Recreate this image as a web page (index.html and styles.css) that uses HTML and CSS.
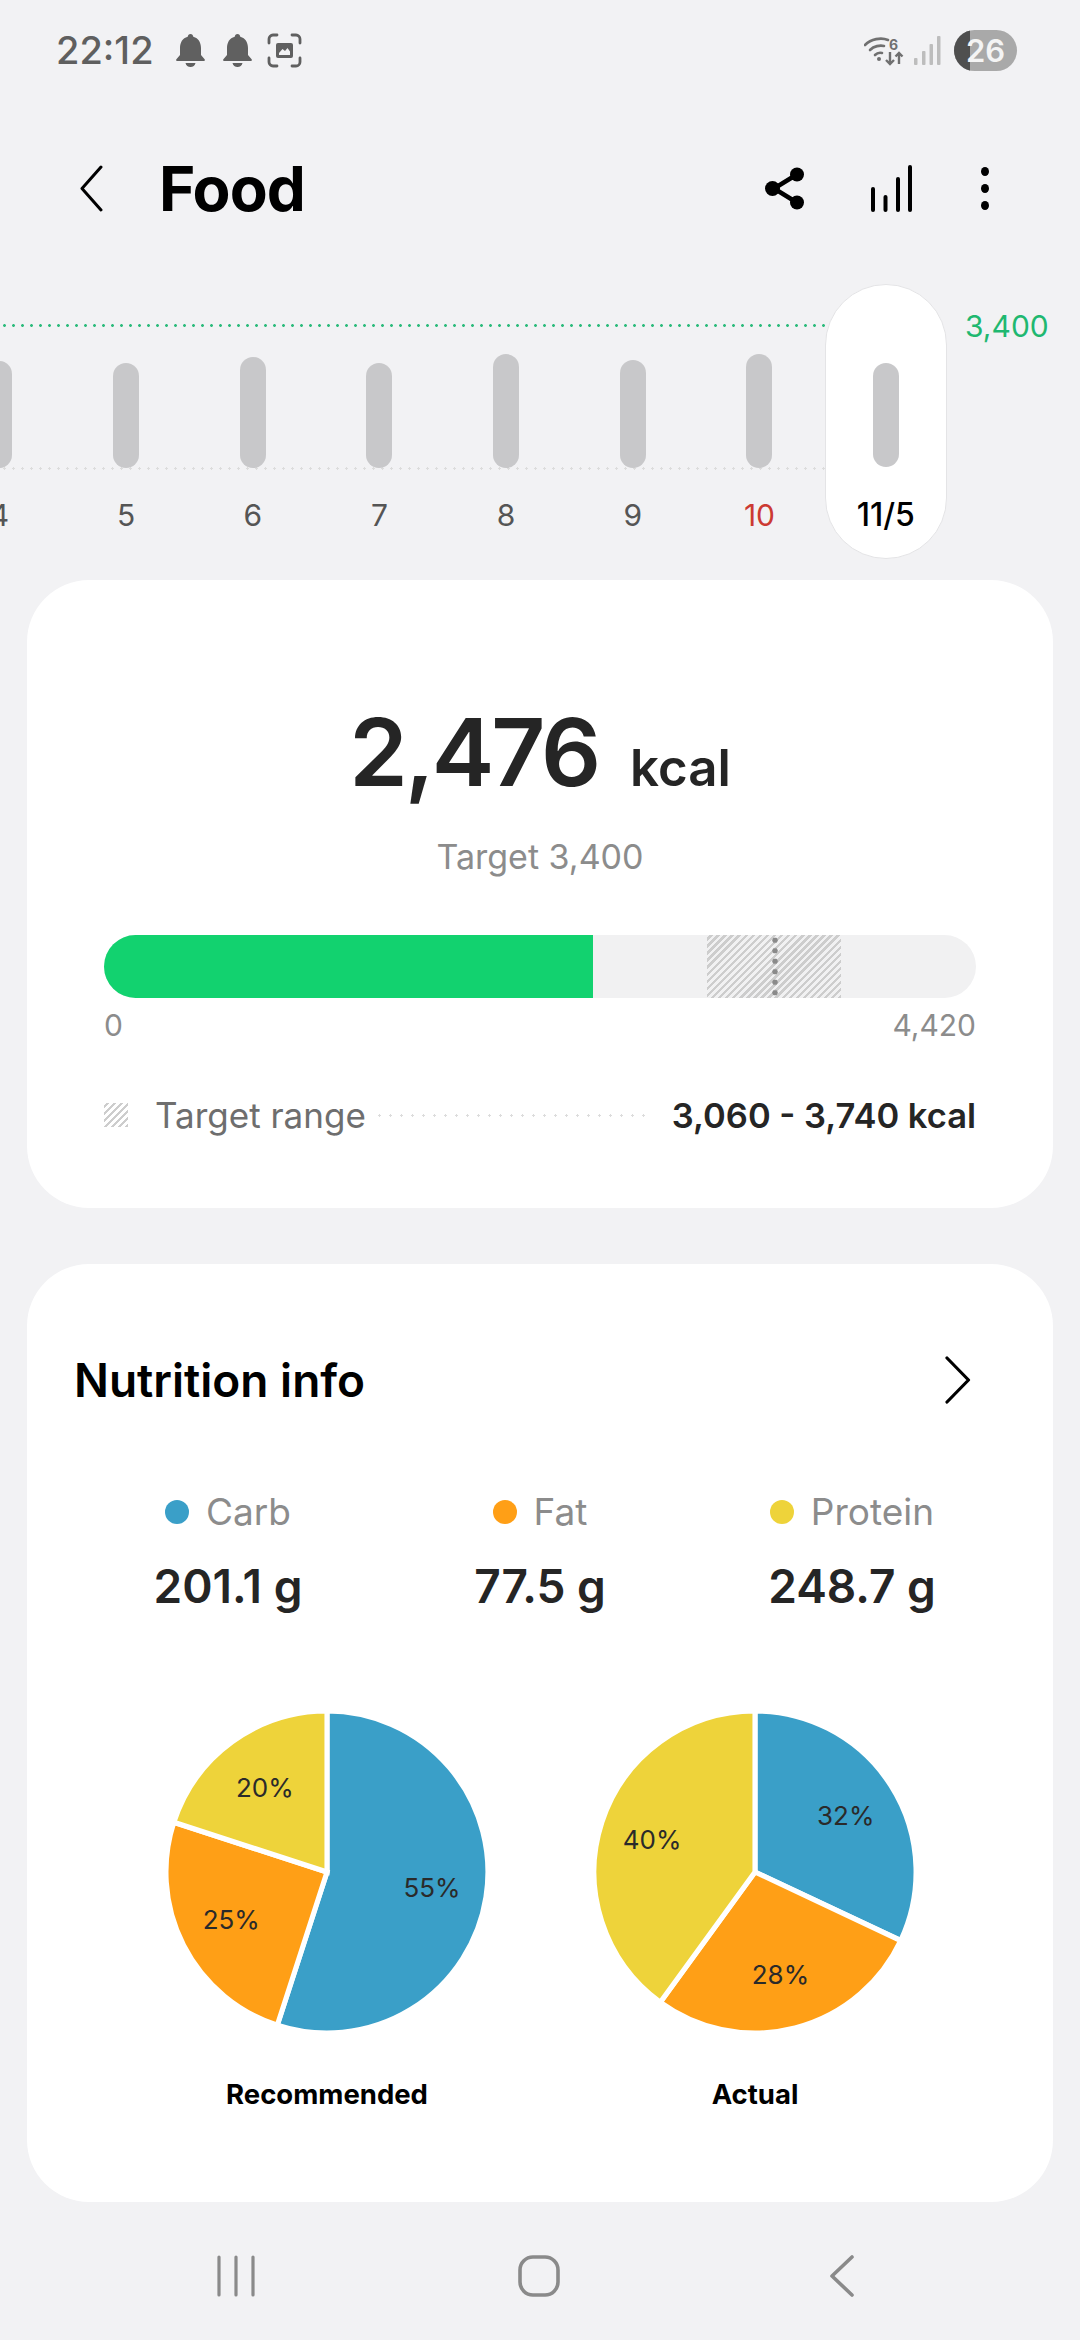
FILE: index.html
```html
<!DOCTYPE html>
<html lang="en">
<head>
    <meta charset="UTF-8">
    <meta name="viewport" content="width=device-width, initial-scale=1.0">
    <title>Food</title>
    <link rel="stylesheet" href="styles.css">
</head>
<body>
    <div class="status">
        <div class="status-left">
            <span class="clock">22:12</span>
            <svg class="bell" viewBox="0 0 29 33"><path d="M14.5 0c1.6 0 2.6 1.2 2.8 2.7C22.500 4 25 8.500 25 14v7l3.600 4.300c.6.8.1 1.700-.9 1.700H1.300c-1 0-1.500-.9-.9-1.700L4 21v-7C4 8.500 6.500 4 11.700 2.700 11.900 1.200 12.900 0 14.500 0zM9.500 29h10c-.5 2.400-2.500 4-5 4s-4.500-1.600-5-4z"/></svg>
            <svg class="bell" viewBox="0 0 29 33"><path d="M14.5 0c1.600 0 2.600 1.200 2.800 2.700C22.500 4 25 8.500 25 14v7l3.600 4.300c.6.8.1 1.700-.9 1.700H1.300c-1 0-1.500-.9-.9-1.700L4 21v-7C4 8.500 6.500 4 11.700 2.700 11.900 1.200 12.900 0 14.500 0zM9.500 29h10c-.5 2.400-2.500 4-5 4s-4.500-1.600-5-4z"/></svg>
            <svg class="shot" viewBox="0 0 35 35"><path d="M2 10V6a4 4 0 0 1 4-4h4M25 2h4a4 4 0 0 1 4 4v4M33 25v4a4 4 0 0 1-4 4h-4M10 33H6a4 4 0 0 1-4-4v-4" fill="none" stroke="#606060" stroke-width="2.800" stroke-linecap="round"/><path d="M11 10h13a2 2 0 0 1 2 2v11a2 2 0 0 1-2 2H11a2 2 0 0 1-2-2V12a2 2 0 0 1 2-2z" fill="#606060"/><path d="M12 20l3.500-4 2.500 2 2.500-3 2.500 3.500V22H12z" fill="#f2f2f4"/></svg>
        </div>
        <div class="status-right">
            <svg class="wifi" viewBox="0 0 40 30"><g fill="none" stroke="#707070" stroke-width="2.600" stroke-linecap="round"><path d="M1 9C7 3 17 1 24 4"/><path d="M6 14c4-4 10-5 14-4"/><path d="M11 19c2-2 5-2.500 7-2"/></g><circle cx="15" cy="23" r="2" fill="#707070"/><text x="25" y="14" class="wifi-six">6</text><path d="M26 16v12m-4-4l4 4 4-4M35 28V17m-3.500 3.500L35 17l3.500 3.500" fill="none" stroke="#707070" stroke-width="2.400"/></svg>
            <svg class="signal" viewBox="0 0 27 29"><rect x="0" y="22" width="3.500" height="7" rx="1"/><rect x="8" y="15" width="3.500" height="14" rx="1"/><rect x="15.500" y="8" width="3.500" height="21" rx="1"/><rect x="23" y="0" width="3.500" height="29" rx="1"/></svg>
            <div class="battery"><span class="battery-used"></span><span class="battery-num">26</span></div>
        </div>
    </div>

    <div class="appbar">
        <svg class="back" viewBox="0 0 24 47"><path d="M22 2L3 23.500 22 45" fill="none" stroke="#000" stroke-width="3" stroke-linecap="round" stroke-linejoin="round"/></svg>
        <h1 class="title">Food</h1>
        <svg class="share" viewBox="0 0 40 43"><path d="M31 8L9 21.500 31 35" fill="none" stroke="#000" stroke-width="4.500"/><circle cx="32" cy="7.500" r="7"/><circle cx="7.500" cy="21.500" r="7.500"/><circle cx="32" cy="35.500" r="7"/></svg>
        <svg class="graph" viewBox="0 0 41 47"><g stroke="#000" stroke-width="4" stroke-linecap="round"><path d="M2 24v21"/><path d="M14.500 32v13"/><path d="M27 14v31"/><path d="M39 2v43"/></g></svg>
        <div class="kebab"><i></i><i></i><i></i></div>
    </div>

    <div class="chart">
        <div class="goal-line"></div>
        <span class="goal-num">3,400</span>
        <div class="base-line"></div>
        <div class="days">
            <div class="day"><div class="bar h107"></div><span>4</span></div>
            <div class="day"><div class="bar h105"></div><span>5</span></div>
            <div class="day"><div class="bar h111"></div><span>6</span></div>
            <div class="day"><div class="bar h105"></div><span>7</span></div>
            <div class="day"><div class="bar h114"></div><span>8</span></div>
            <div class="day"><div class="bar h108"></div><span>9</span></div>
            <div class="day sunday"><div class="bar h114"></div><span>10</span></div>
            <div class="day today"><div class="bar h104"></div><span>11/5</span></div>
        </div>
    </div>

    <section class="card summary">
        <div class="total"><span class="total-num">2,476</span><span class="total-unit">kcal</span></div>
        <div class="target">Target 3,400</div>
        <div class="meter">
            <div class="meter-fill"></div>
            <div class="meter-range"><div class="meter-mark"></div></div>
        </div>
        <div class="scale"><span>0</span><span>4,420</span></div>
        <div class="range-row">
            <span class="range-swatch"></span>
            <span class="range-label">Target range</span>
            <span class="range-dots"></span>
            <span class="range-value">3,060 - 3,740 kcal</span>
        </div>
    </section>

    <section class="card nutrition">
        <div class="nutrition-head">
            <h2>Nutrition info</h2>
            <svg class="forward" viewBox="0 0 26 48"><path d="M2 2l21.500 22L2 46" fill="none" stroke="#000" stroke-width="3.200" stroke-linecap="round" stroke-linejoin="round"/></svg>
        </div>
        <div class="macros">
            <div class="macro carb">
                <div class="macro-name"><i></i>Carb</div>
                <div class="macro-val">201.1 g</div>
            </div>
            <div class="macro fat">
                <div class="macro-name"><i></i>Fat</div>
                <div class="macro-val">77.5 g</div>
            </div>
            <div class="macro protein">
                <div class="macro-name"><i></i>Protein</div>
                <div class="macro-val">248.7 g</div>
            </div>
        </div>
        <div class="pies">
            <figure class="pie-box">
                <svg class="pie" viewBox="3 3 314 314">
                    <path class="s-carb" d="M160 160L160 2A158 158 0 1 1 111.200 310.300Z"/>
                    <path class="s-fat" d="M160 160L111.200 310.300A158 158 0 0 1 9.700 111.200Z"/>
                    <path class="s-protein" d="M160 160L9.700 111.200A158 158 0 0 1 160 2Z"/>
                    <text x="263" y="185">55%</text>
                    <text x="66" y="216">25%</text>
                    <text x="99" y="86">20%</text>
                </svg>
                <figcaption>Recommended</figcaption>
            </figure>
            <figure class="pie-box">
                <svg class="pie" viewBox="3 3 314 314">
                    <path class="s-carb" d="M160 160L160 2A158 158 0 0 1 303 227.300Z"/>
                    <path class="s-fat" d="M160 160L303 227.300A158 158 0 0 1 67.100 287.800Z"/>
                    <path class="s-protein" d="M160 160L67.100 287.800A158 158 0 0 1 160 2Z"/>
                    <text x="249" y="114">32%</text>
                    <text x="59" y="137">40%</text>
                    <text x="185" y="270">28%</text>
                </svg>
                <figcaption>Actual</figcaption>
            </figure>
        </div>
    </section>

    <div class="navbar">
        <svg class="nav-recent" viewBox="0 0 38 42"><path d="M2 2v38M19 2v38M36 2v38" stroke="#8a8a8a" stroke-width="3.200" stroke-linecap="round"/></svg>
        <svg class="nav-home" viewBox="0 0 42 42"><rect x="2" y="2" width="38" height="38" rx="13" fill="none" stroke="#8a8a8a" stroke-width="3.600"/></svg>
        <svg class="nav-back" viewBox="0 0 24 42"><path d="M22 2L2 21l20 19" fill="none" stroke="#8a8a8a" stroke-width="3.600" stroke-linecap="round" stroke-linejoin="round"/></svg>
    </div>
</body>
</html>
```

FILE: styles.css
```css
* {
    margin: 0;
    padding: 0;
    box-sizing: border-box;
}
html, body {
    width: 1080px;
    height: 2340px;
    overflow: hidden;
}
body {
    background-color: #f2f2f4;
    font-family: Inter, "Noto Sans", sans-serif;
    color: #252525;
}

/* status bar */
.status {
    height: 100px;
    padding: 30px 63px 0 56px;
    display: flex;
    justify-content: space-between;
    align-items: flex-start;
}
.status-left {
    display: flex;
    align-items: center;
    height: 40px;
}
.clock {
    font-size: 38px;
    font-weight: 500;
    color: #5f5f5f;
    width: 120px;
}
.bell {
    width: 29px;
    height: 33px;
    fill: #606060;
    margin-right: 18px;
}
.shot {
    width: 35px;
    height: 35px;
    margin-left: -3px;
}
.status-right {
    display: flex;
    align-items: center;
    height: 41px;
}
.wifi {
    width: 40px;
    height: 30px;
    margin-right: 10px;
}
.wifi-six {
    font-size: 14px;
    font-weight: 700;
    fill: #707070;
}
.signal {
    width: 27px;
    height: 29px;
    fill: #bdbdbd;
    margin-right: 13px;
}
.battery {
    width: 63px;
    height: 41px;
    border-radius: 21px;
    background-color: #a9a9a9;
    overflow: hidden;
    position: relative;
    text-align: center;
}
.battery-used {
    position: absolute;
    left: 0;
    top: 0;
    width: 16px;
    height: 100%;
    background-color: #4f4f4f;
}
.battery-num {
    position: relative;
    font-size: 31px;
    line-height: 41px;
    font-weight: 600;
    color: #f4f4f4;
}

/* title row */
.appbar {
    height: 47px;
    margin-top: 65px;
    padding-left: 79px;
    display: flex;
    align-items: center;
}
.back {
    width: 24px;
    height: 47px;
}
.title {
    font-size: 62px;
    font-weight: 700;
    letter-spacing: -1px;
    color: #000;
    margin-left: 56px;
    width: 606px;
}
.share {
    width: 40px;
    height: 43px;
}
.graph {
    width: 41px;
    height: 47px;
    margin-left: 66px;
}
.kebab {
    margin-left: 69px;
    display: flex;
    flex-direction: column;
    gap: 8px;
}
.kebab i {
    display: block;
    width: 8px;
    height: 9px;
    border-radius: 50%;
    background-color: #000;
}

/* week chart */
.chart {
    position: relative;
    height: 296px;
    margin-top: 72px;
    overflow: hidden;
}
.goal-line {
    position: absolute;
    left: 0;
    top: 40px;
    width: 826px;
    height: 3px;
    background: radial-gradient(circle, #2dbb7c 1.200px, transparent 1.600px) 0 0 / 9px 3px repeat-x;
}
.goal-num {
    position: absolute;
    left: 965px;
    top: 24px;
    font-size: 30px;
    color: #1fb870;
}
.base-line {
    position: absolute;
    left: 0;
    top: 183px;
    width: 826px;
    height: 3px;
    background: radial-gradient(circle, #dcdcdc 1px, transparent 1.400px) 0 0 / 9px 3px repeat-x;
}
.days {
    position: relative;
    display: flex;
    margin-left: -64px;
}
.day {
    width: 126.700px;
    height: 275px;
    padding-bottom: 91px;
    flex: none;
    display: flex;
    flex-direction: column;
    justify-content: flex-end;
    align-items: center;
    position: relative;
    font-size: 30px;
    color: #555;
}
.day span {
    position: absolute;
    top: 213px;
}
.bar {
    width: 26px;
    border-radius: 13px;
    background-color: #c8c8ca;
}
.h104 { height: 104px; }
.h105 { height: 105px; }
.h107 { height: 107px; }
.h108 { height: 108px; }
.h111 { height: 111px; }
.h114 { height: 114px; }
.sunday {
    color: #cc3a32;
}
.today {
    width: 122px;
    margin-left: 2px;
    background-color: #fff;
    border: 1px solid #e4e4e6;
    border-radius: 61px;
    color: #000;
    font-size: 32px;
    font-weight: 500;
}
.today span {
    top: 210px;
}

/* cards */
.card {
    margin: 0 27px;
    background-color: #fff;
    border-radius: 62px;
}
.summary {
    height: 628px;
    margin-top: 0;
    padding: 0 77px;
    display: flex;
    flex-direction: column;
}
.total {
    margin-top: 122px;
    display: flex;
    justify-content: center;
    align-items: baseline;
    line-height: 100px;
}
.total-num {
    font-size: 94px;
    font-weight: 600;
    letter-spacing: -3px;
}
.total-unit {
    font-size: 51px;
    font-weight: 600;
    margin-left: 32px;
}
.target {
    margin-top: 18px;
    text-align: center;
    font-size: 34px;
    color: #8c8c8c;
}
.meter {
    position: relative;
    margin-top: 58px;
    height: 63px;
    border-radius: 32px;
    background-color: #f1f1f2;
    overflow: hidden;
}
.meter-fill {
    width: 489px;
    height: 100%;
    background-color: #12d26f;
}
.meter-range {
    position: absolute;
    left: 603px;
    top: 0;
    width: 134px;
    height: 100%;
    background: repeating-linear-gradient(-45deg, #cdcdcd 0 2.400px, #f1f1f2 2.400px 5px);
}
.meter-mark {
    position: absolute;
    left: 65px;
    top: 0;
    bottom: 0;
    width: 6px;
    background: radial-gradient(circle, #8a8a8a 2.400px, transparent 3px) 0 0 / 6px 10.500px repeat-y;
}
.scale {
    display: flex;
    justify-content: space-between;
    margin-top: 9px;
    font-size: 30px;
    color: #8c8c8c;
}
.range-row {
    display: flex;
    align-items: center;
    margin-top: 51px;
}
.range-swatch {
    width: 24px;
    height: 24px;
    background: repeating-linear-gradient(-45deg, #cdcdcd 0 2.400px, #fff 2.400px 5px);
}
.range-label {
    margin-left: 27px;
    font-size: 35px;
    color: #6e6e6e;
}
.range-dots {
    flex: 1;
    height: 3px;
    margin: 0 26px 0 8px;
    background: radial-gradient(circle, #dcdcdc 1px, transparent 1.400px) 0 0 / 11px 3px repeat-x;
}
.range-value {
    font-size: 34.500px;
    font-weight: 600;
}
.nutrition {
    height: 938px;
    margin-top: 56px;
    padding-top: 90px;
}
.nutrition-head {
    height: 52px;
    padding: 0 82px 0 47px;
    display: flex;
    justify-content: space-between;
    align-items: center;
}
.nutrition-head h2 {
    font-size: 46px;
    font-weight: 600;
    color: #000;
}
.forward {
    width: 26px;
    height: 48px;
}
.macros {
    display: flex;
    margin-top: 83px;
    padding-left: 45px;
}
.macro {
    width: 312px;
    text-align: center;
}
.macro-name {
    display: flex;
    justify-content: center;
    align-items: center;
    font-size: 37px;
    color: #8c8c8c;
}
.macro-name i {
    width: 24px;
    height: 24px;
    border-radius: 50%;
    margin-right: 17px;
}
.carb i { background-color: #3a9fc8; }
.fat i { background-color: #ff9f16; }
.protein i { background-color: #eed33a; }
.macro-val {
    margin-top: 24px;
    font-size: 46px;
    font-weight: 600;
}
.pies {
    display: flex;
    margin-top: 98px;
    padding-left: 140px;
    gap: 108px;
}
.pie-box {
    width: 320px;
    text-align: center;
}
.pie {
    display: block;
    width: 320px;
    height: 320px;
}
.pie path {
    stroke: #fff;
    stroke-width: 5;
}
.pie text {
    font-size: 25.500px;
    text-anchor: middle;
    fill: #2a2a2a;
}
.s-carb { fill: #3a9fc8; }
.s-fat { fill: #ff9f16; }
.s-protein { fill: #eed33a; }
.pie-box figcaption {
    margin-top: 45px;
    font-size: 27.500px;
    font-weight: 700;
    color: #000;
}

/* nav buttons */
.navbar {
    display: flex;
    align-items: center;
    margin-top: 53px;
    padding-left: 217px;
}
.nav-recent {
    width: 38px;
    height: 42px;
}
.nav-home {
    width: 42px;
    height: 42px;
    margin-left: 263px;
}
.nav-back {
    width: 24px;
    height: 42px;
    margin-left: 270px;
}
```
